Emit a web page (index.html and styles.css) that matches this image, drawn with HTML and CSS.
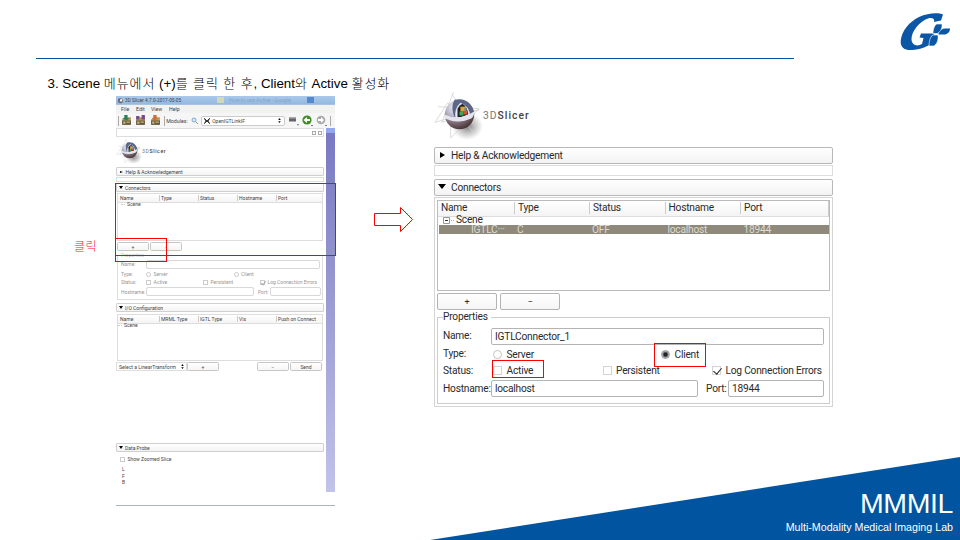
FILE: index.html
```html
<!DOCTYPE html>
<html lang="ko">
<head>
<meta charset="utf-8">
<title>MMMIL</title>
<link rel="stylesheet" href="styles.css">
</head>
<body>
<svg class="defs" width="0" height="0">
  <defs>
    <radialGradient id="ball" cx="35%" cy="25%" r="80%"><stop offset="0" stop-color="#f4f4fa"/><stop offset=".4" stop-color="#b4b4c8"/><stop offset=".72" stop-color="#75606a"/><stop offset="1" stop-color="#41322f"/></radialGradient>
    <radialGradient id="shade"><stop offset="0" stop-color="#555" stop-opacity=".75"/><stop offset="1" stop-color="#777" stop-opacity="0"/></radialGradient>
    <symbol id="slicer" viewBox="0 0 50 50">
      <ellipse cx="34" cy="36" rx="16" ry="14" fill="url(#shade)"/>
      <path d="M20 1L8 32L46 19L1 32L14 12L40 42M18 3L42 36M17 48L46 18L4 16M17 48V34" fill="none" stroke="#d2d2d2" stroke-width=".8"/>
      <circle cx="26" cy="24" r="15" fill="url(#ball)"/>
      <path d="M21 9C32 6 40 13 41 24L35 27L22 29Q16 17 21 9Z" fill="#5b6689"/>
      <path d="M22 29Q20 18 27 12Q36 15 37 26Q29 30 22 29Z" fill="#e6ebf2"/>
      <path d="M24 27V18Q26 14 29 13Q34 16 35 24Q29 27 24 27Z" fill="#20252d"/>
      <path d="M27 16h6v5h-6z" fill="#e5a32c"/><path d="M26 21h4v4h-4z" fill="#40a85b"/><path d="M30 20h4v4h-4z" fill="#d94e35"/><path d="M31 17h2v3h-2z" fill="#4b91cc"/>
      <path d="M11 24Q25 31 41 21Q41 26 38 28Q25 34 11 28Z" fill="#e4e4ef"/>
    </symbol>
    <symbol id="crate" viewBox="0 0 10 10"><path d="M1 4L3 2H9V8H1Z" fill="#b79a58"/><path d="M1 5H9V9H1Z" fill="#655a40"/><path d="M2 6h2v2H2zM5 6h3v1H5z" fill="#c8b77f"/></symbol>
  </defs>
</svg>
<main class="slide">
  <header class="top">
    <svg class="brand" viewBox="0 0 50 38">
      <path d="M43 1.500C39-.5 29-.8 19 4C9 9 2 18 .8 27C0 34 4 37.500 12 37C20 36.500 26 34 30 31.500L31 27L31.500 23.500L35 20.500L21 20.500L19.500 24.500L23.500 25L22 31C17 34 11.500 32 11.500 26C11.500 18 20 8 28 5.500C32 4.300 35 5.500 34 9L41 7.500Z" fill="#0b56a5"/>
      <path d="M36.500 11h5.500c.5 4-1 7-4.500 9.500L33 20.500C33 16.500 34 13 36.500 11Z" fill="#0b56a5" stroke="#fff" stroke-width=".6"/>
      <path d="M38.500 20.500C40 17.500 42 15.500 45 15.500H50C50 19 47.500 21.500 44 21.500H38.500Z" fill="#0b56a5"/>
      <path d="M32.500 22H38C38.500 27 37 31.500 33.500 33H29C29 28.500 30 24.500 32.500 22Z" fill="#0b56a5" stroke="#fff" stroke-width=".6"/>
    </svg>
  </header>
  <h1 class="title">3. Scene <span>메뉴에서</span> (+)<span>를 클릭 한 후</span>, Client<span>와</span> Active <span>활성화</span></h1>

  <div class="content">
    <div class="click">클릭</div>
    <section class="shot left">
      <div class="winbar"><svg viewBox="0 0 8 8"><circle cx="4" cy="4" r="3" fill="#667"/><path d="M4 2h2v3H3z" fill="#eee"/></svg><span>3D Slicer 4.7.0-2017-05-05</span><i class="tab t1"></i><em>How to use Active - Google</em><i class="tab t2"></i></div>
      <nav class="menu"><span>File</span><span>Edit</span><span>View</span><span>Help</span></nav>
      <div class="tools">
        <b></b>
        <svg viewBox="0 0 10 10"><use href="#crate"/><path d="M3 0h3v3h2L5 5 1 3h2z" fill="#27805b"/></svg>
        <svg viewBox="0 0 10 10"><use href="#crate"/><path d="M1 1h3v3H1zM6 0h3v4H6z" fill="#764a8b"/></svg>
        <svg viewBox="0 0 10 10"><use href="#crate"/><path d="M3 0h3v3h1L4 5 2 3h1z" fill="#d56a34"/></svg>
        <b></b><span class="mod">Modules:</span>
        <svg class="lens" viewBox="0 0 8 8"><circle cx="3" cy="3" r="2" fill="#d6ecff" stroke="#77aad5"/><path d="M4.5 4.5L7 7" stroke="#b98d59"/></svg>
        <div class="combo"><svg viewBox="0 0 6 6"><path d="M0 0L2 3L0 6M6 0L4 3L6 6M1 1L5 5M1 5L5 1" stroke="#333" fill="none"/></svg><span>OpenIGTLinkIF</span><svg class="spin" viewBox="0 0 4 8"><path d="M0 3L2 0L4 3ZM0 5L2 8L4 5Z"/></svg></div>
        <svg class="hist" viewBox="0 0 10 10"><path d="M0 2h7v4H0z" fill="#666"/><path d="M0 2h7v1H0z" fill="#aaa"/><path d="M8 9h2l-1 1z"/></svg>
        <svg class="nav" viewBox="0 0 11 11"><circle cx="5" cy="5" r="4.600" fill="#438d28"/><path d="M1.500 5L5 2v2h3v2H5v2z" fill="#fff"/><path d="M9 10h2l-1 1z"/></svg>
        <svg class="nav" viewBox="0 0 11 11"><circle cx="5" cy="5" r="4.300" fill="#aaa"/><path d="M8 5L5 2v2H2v2h3v2z" fill="#fff"/><path d="M9 10h2l-1 1z"/></svg>
        <b></b>
      </div>
      <div class="split">
        <div class="module">
          <div class="dock"><i></i><i></i></div>
          <div class="logo"><svg><use href="#slicer"/></svg><span>3D<strong>Slicer</strong></span></div>
          <div class="fold closed">Help &amp; Acknowledgement</div>
          <div class="strip"></div>
          <div class="fold open">Connectors</div>
          <div class="tree">
            <div class="cols"><span>Name</span><span>Type</span><span>Status</span><span>Hostname</span><span>Port</span></div>
            <div class="scene"><i></i>Scene</div>
          </div>
          <div class="btns"><button>+</button><button>-</button></div>
          <div class="group">
            <div class="legend"><span>Properties</span></div>
            <div class="line name"><label>Name:</label><div class="field"></div></div>
            <div class="line type"><label>Type:</label><i class="radio"></i><span>Server</span><i class="radio"></i><span>Client</span></div>
            <div class="line status"><label>Status:</label><i class="box"></i><span>Active</span><i class="box"></i><span>Persistent</span><i class="box checked"></i><span>Log Connection Errors</span></div>
            <div class="line host"><label>Hostname:</label><div class="field"></div><label>Port:</label><div class="field"></div></div>
          </div>
          <div class="fold open io">I/O Configuration</div>
          <div class="tree iotree">
            <div class="cols"><span>Name</span><span>MRML Type</span><span>IGTL Type</span><span>Vis</span><span>Push on Connect</span></div>
            <div class="scene"><i></i>Scene</div>
          </div>
          <div class="actions"><div class="select"><span>Select a LinearTransform</span><svg viewBox="0 0 4 8"><path d="M0 3L2 0L4 3ZM0 5L2 8L4 5Z"/></svg></div><button>+</button><button class="minus">−</button><button>Send</button></div>
          <div class="fold open probe">Data Probe</div>
          <div class="zoomed"><i class="box"></i><span>Show Zoomed Slice</span></div>
          <div class="lfb"><span>L</span><span>F</span><span>B</span></div>
        </div>
        <div class="view"><i></i></div>
      </div>
      <div class="edge"></div>
      <div class="mark m-panel"></div>
      <div class="mark m-add"></div>
    </section>

    <svg class="arrow" viewBox="0 0 41 28"><path d="M1.500 7.500H27.500V1.500L39.500 13.500L27.500 25.500V19.500H1.500Z" fill="#fff" stroke="#f00"/></svg>

    <section class="shot right">
      <div class="logo"><svg><use href="#slicer"/></svg><span>3D<strong>Slicer</strong></span></div>
      <div class="fold closed"><span>Help &amp; Acknowledgement</span></div>
      <div class="strip"></div>
      <div class="fold open"><span>Connectors</span></div>
      <div class="panel">
        <div class="tree">
          <div class="cols"><span>Name</span><span>Type</span><span>Status</span><span>Hostname</span><span>Port</span></div>
          <div class="scene"><svg viewBox="0 0 12 8"><path d="M.5.500h6v6h-6z" fill="#fff" stroke="#999"/><path d="M2 3.500h3" stroke="#333"/><path d="M8 3.500h4" stroke="#aaa" stroke-dasharray="1 1"/></svg><span>Scene</span></div>
          <div class="selected"><span>IGTLC···</span><span>C</span><span>OFF</span><span>localhost</span><span>18944</span></div>
        </div>
        <div class="btns"><button>+</button><button>−</button></div>
        <div class="group">
          <div class="legend"><span>Properties</span></div>
          <div class="line name"><label>Name:</label><div class="field">IGTLConnector_1</div></div>
          <div class="line type"><label>Type:</label><i class="radio"></i><span>Server</span><i class="radio on"></i><span>Client</span></div>
          <div class="line status"><label>Status:</label><i class="box"></i><span>Active</span><i class="box"></i><span>Persistent</span><i class="box checked"></i><span>Log Connection Errors</span></div>
          <div class="line host"><label>Hostname:</label><div class="field">localhost</div><label>Port:</label><div class="field">18944</div></div>
        </div>
      </div>
      <div class="mark m-active"></div>
      <div class="mark m-client"></div>
    </section>
  </div>

  <footer class="foot">
    <div class="lab">MMMIL</div>
    <div class="sub">Multi-Modality Medical Imaging Lab</div>
  </footer>
</main>
</body>
</html>
```
FILE: styles.css
```css
* { box-sizing: border-box; }
body { margin: 0; background: #fff; color: #000; font-family: "Liberation Sans", "Noto Sans CJK KR", sans-serif; }
i, em { font-style: normal; }
.defs { display: block; width: 0; height: 0; }
.slide { position: relative; width: 960px; height: 540px; overflow: hidden; }
.top { height: 59px; margin-left: 36px; width: 758px; border-bottom: 1.3px solid #0054a0; }
.brand { display: block; width: 50px; height: 38px; margin-left: 864px; transform: translateY(13px); }
.title { margin: 16px 0 0 47.500px; height: 18px; line-height: 18px; font-size: 13.33px; font-weight: 400; white-space: pre; }
.title span { font-weight: 300; font-size: 13px; letter-spacing: .9px; }
.content { display: flex; align-items: flex-start; height: 447px; }
.click { width: 42px; margin: 145px 0 0 74px; color: #f22; font-size: 12px; line-height: 18px; font-weight: 300; letter-spacing: .4px; }

/* Shared application widgets */
.shot { position: relative; font-family: Roboto, sans-serif; flex: none; white-space: nowrap; }
.logo { display: flex; align-items: center; color: #777; }
.logo svg { flex: none; }
.logo strong { font-weight: 500; color: #444; }
.fold { display: flex; align-items: center; border: 1px solid #c4c4c4; border-radius: 1px; background: linear-gradient(#fff, #f3f3f3); }
.fold::before { content: ""; flex: none; }
.strip { border: 1px solid #ddd; }
.tree { border: 1px solid #ccc; background: #fff; }
.cols { display: grid; align-items: center; background: linear-gradient(#fff, #f4f4f4); border-bottom: 1px solid #ddd; }
.cols span + span { border-left: 1px solid #ccc; }
.scene { display: flex; align-items: center; }
button { padding: 0; border: 1px solid #c6c6c6; border-radius: 1.5px; background: linear-gradient(#fff, #f5f5f5); font: inherit; color: inherit; display: flex; align-items: center; justify-content: center; }
.btns, .line, .actions { display: flex; align-items: center; }
.group { border: 1px solid #ccc; }
.field { border: 1px solid #c4c4c4; border-radius: 2px; background: #fff; display: flex; align-items: center; }
.radio, .box { flex: none; border: 1px solid #c8c2bb; background: #fff; }
.radio { border-radius: 50%; }
.mark { position: absolute; border: 1px solid #f00; }

/* Full application window */
.left { width: 219px; height: 410px; margin-top: 3px; font-size: 5px; color: #444; }
.winbar { height: 9px; display: flex; align-items: center; background: linear-gradient(#abc9ea, #93b9e1); border-bottom: 1px solid #a8c3df; font-size: 4.800px; overflow: hidden; }
.winbar svg { width: 7px; height: 7px; margin: 0 1px 0 1px; }
.winbar span { width: 78px; }
.winbar em { width: 78px; margin-left: 5px; font-size: 5.200px; color: #85a5c6; }
.tab { width: 7px; height: 6px; background: #d3d8b6; }
.t1 { margin-left: 14px; }
.t2 { background: #5289cf; }
.menu { height: 8px; background: #f2f2f2; display: grid; grid-template-columns: 15px 15px 18px 20px; padding-left: 5px; align-items: center; font-size: 5.200px; }
.tools { height: 15px; display: flex; align-items: center; background: #f6f6f6; overflow: hidden; }
.tools > b { width: 1px; height: 10px; background: #aaa; margin-left: 2px; }
.tools > svg { width: 11px; height: 11px; margin-left: 2px; margin-right: 1.4px; flex: none; }
.tools > .mod { width: 23px; margin-left: 1px; font-size: 5.300px; }
.tools > .lens { width: 8px; height: 8px; margin: 0 2px; }
.combo { width: 84px; height: 10px; flex: none; border: 1px solid #ccc; border-radius: 2px; background: #fff; display: flex; align-items: center; padding: 0 2px; font-size: 5px; }
.combo svg { width: 6px; height: 6px; margin-right: 2px; }
.combo span { flex: 1; }
.combo .spin { width: 3px; height: 5px; margin: 0 1px; }
.tools > .hist { width: 10px; margin: 0 1px 0 4px; }
.tools > .nav { margin: 0 1px 0 2px; }
.split { display: flex; justify-content: space-between; height: 364px; }
.module { width: 208px; }
.view { width: 9px; background: linear-gradient(#7778c2, #9c9dd3 50%, #c2c3e9); }
.view i { display: block; height: 5px; background: #93a7ee; }
.edge { height: 1px; margin-top: 13px; background: #a9b5c0; }
.dock { height: 9px; border: 1px solid #ddd; display: flex; justify-content: flex-end; gap: 2px; align-items: center; padding-right: 1px; }
.dock i { width: 4px; height: 4px; border: 1px solid #aaa; }
.left .logo { height: 30px; font-size: 5.2px; letter-spacing: .6px; padding-bottom: 3px; }
.left .logo svg { width: 26px; height: 26px; }
.left .fold { height: 9px; padding-left: 3px; border-color: #d0d0d0; }
.closed::before { border: solid transparent; border-left-color: #000; }
.open::before { border: solid transparent; border-top-color: #000; }
.left .closed::before { border-width: 1.5px 0 1.5px 3px; width: 0; margin-right: 2.500px; }
.left .open::before { border-width: 3px 2px 0; margin-right: 2px; margin-left: -1px; }
.left .strip { height: 5px; margin: 1px 0; }
.left .tree { height: 48px; margin: 1px 1px 0; border-color: #ddd; }
.left .cols { height: 9px; grid-template-columns: 39px 39px 39px 39px auto; padding-left: 2px; line-height: 6px; }
.left .cols span + span { padding-left: 1px; }
.left .scene { height: 3px; padding-left: 3px; line-height: 3px; }
.left .scene i { width: 4px; border-top: 1px dotted #ccc; margin-right: 2px; }
.left .iotree .scene { padding-left: 0; }
.left .btns { height: 9px; margin: 1px 0 0 1px; gap: 1px; }
.left .btns button { width: 32px; height: 9px; }
.left .group { height: 45px; margin: 4px 1px 0; color: #969696; border-color: #ddd; }
.left .legend { height: 3px; padding-left: 3px; }
.left .legend span { display: inline-block; background: #fff; transform: translateY(-4px); line-height: 6px; color: #c4c4c4; padding-right: 2px; }
.legend { line-height: 1; }
.left label { width: 25px; flex: none; }
.left .line { padding-left: 3px; height: 8px; }
.left .name { height: 10px; }
.left .field { height: 9px; width: 174px; border-color: #d8d8d8; }
.left .radio, .left .box { width: 5px; height: 5px; margin-right: 2.500px; border-color: #ccc; }
.left .type { margin-top: 1px; }
.left .type span { width: 80px; }
.left .status span { width: 49.500px; }
.left .host { height: 9px; margin-top: 1px; }
.left .host .field { width: 108px; }
.left .host .field + label { width: 12px; margin-left: 4px; }
.left .host label + .field:last-child { width: 51px; }
.left .io { margin-top: 3px; }
.left .iotree { height: 47px; margin-top: 2px; }
.actions { height: 9px; margin: 1px 0 0; }
.select { width: 71px; height: 9px; border: 1px solid #ddd; padding: 0 2px; display: flex; align-items: center; justify-content: space-between; font-size: 5.100px; }
.select svg { width: 3px; height: 5px; }
.actions button { width: 32px; height: 9px; }
.actions .minus { margin: 0 1px 0 38px; }
.left .probe { margin-top: 72px; }
.zoomed { display: flex; height: 8px; margin: 3px 0 0 4px; align-items: center; }
.lfb { margin: 3px 0 0 6px; display: grid; line-height: 6.500px; }
.m-panel { left: -1px; top: 87px; width: 221px; height: 73px; }
.m-add { left: -1px; top: 142px; width: 52px; height: 24px; }

.arrow { width: 41px; height: 28px; margin: 113px 0 0 38px; flex: none; }

/* Enlarged module panel */
.right { width: 399px; height: 314px; margin-left: 20px; font-size: 10.200px; letter-spacing: -.22px; color: #2a2a2a; }
.right .logo { height: 54px; font-size: 10.300px; letter-spacing: 1px; padding-bottom: 9px; }
.right .logo svg { width: 49px; height: 51px; margin-right: 0; }
.right .logo span { margin-top: -1px; }
.right .fold { height: 17px; padding-left: 5px; border-color: #b8b8b8; border-radius: 2px; line-height: 15px; }
.right .fold span { margin-top: -1px; }
.right .closed::before { border-width: 3.500px 0 3.500px 5px; margin-right: 6px; margin-top: -1px; }
.right .open::before { border-width: 5px 4px 0; margin: -2px 5px 0 -2px; }
.right .strip { height: 11px; margin: 1px 0 3px; }
.panel { height: 210px; margin-top: 1px; border: 1px solid #d4d4d4; padding: 2px; }
.right .tree { height: 91px; width: 393px; border-color: #bbb; }
.right .cols { height: 16px; grid-template-columns: 73px 75px 75.500px 75.500px auto; padding: 0 0 1px 3px; border-right: 1px solid #ccc; line-height: 12px; }
.right .cols span + span { padding-left: 3px; }
.right .scene { height: 8px; padding-left: 5px; line-height: 8px; }
.right .scene span { margin-top: -2px; }
.right .scene svg { width: 12px; height: 8px; margin-right: 1px; }
.selected { height: 9px; margin-left: 1px; padding-left: 32px; display: grid; grid-template-columns: 46px 75px 75.500px 76px auto; align-items: center; background: #8e897b; color: #dedbd0; line-height: 8px; overflow: hidden; }
.right .btns { height: 17px; margin-top: 2px; gap: 3px; }
.right .btns button { width: 60px; height: 17px; border-radius: 2px; border-color: #b4b4b4; font-size: 9px; }
.right .group { width: 393px; height: 87px; margin-top: 7px; }
.right .legend { height: 10px; padding-left: 5px; }
.right .legend span { display: inline-block; background: #fff; transform: translateY(-7px); line-height: 11px; padding-right: 3px; }
.right .line { padding-left: 5px; height: 17px; }
.right label { width: 48px; flex: none; margin-top: -1px; }
.right .name label { margin-top: -3px; }
.right .field { width: 333px; height: 17px; padding-left: 3px; border-color: #b4b4b4; }
.right .radio, .right .box { width: 9px; height: 9px; margin: 0 4.500px 0 2px; }
.right .radio.on { background: radial-gradient(#222 0 1.500px, #778 2.500px, #e4e4e4 4px); border-color: #999; }
.right .type { margin-top: 0; height: 18px; }
.right .type span { width: 152.500px; }
.right .status { height: 16px; padding-bottom: 1px; }
.right .status span { width: 94px; }
.right .status .box { border-color: #d4d4d4; }
.box.checked { position: relative; }
.box.checked::after { content: ""; position: absolute; transform: rotate(40deg); border: solid #222; border-width: 0 1.600px 1.600px 0; width: 4px; height: 7px; left: 2px; top: -1px; }
.left .box.checked::after { border-width: 0 1px 1px 0; border-color: #aaa; width: 2px; height: 4px; left: 1px; top: -1px; }
.right .host { height: 19px; }
.right .host .field { width: 207px; }
.right .host .field + label { width: 22px; margin-left: 8px; }
.right .host label + .field:last-child { width: 96px; }
.m-active { left: 58px; top: 267px; width: 52px; height: 18px; }
.m-client { left: 220px; top: 250px; width: 52px; height: 24px; }

.foot { position: absolute; right: 0; bottom: 0; width: 530px; height: 83px; padding: 29px 7px 0 0; background: #0054a0; clip-path: polygon(0 100%, 100% 0, 100% 100%); text-align: right; color: #fff; }
.lab { font-size: 28.500px; line-height: 35px; letter-spacing: -.4px; }
.sub { font-size: 10.680px; line-height: 13px; }
```
